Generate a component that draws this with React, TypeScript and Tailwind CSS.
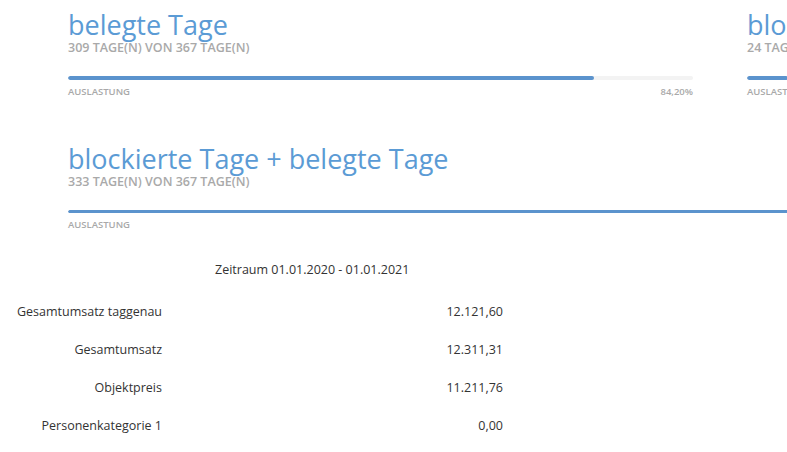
import React from "react";

function Card({
  title,
  sub,
  pct,
  label,
  width,
  bar,
}: {
  title: string;
  sub: string;
  pct: number;
  label: string;
  width: string;
  bar: string;
}) {
  return (
    <div className={`shrink-0 ${width}`}>
      <div className="text-[27px] leading-[30px] text-[#5b9bd5] whitespace-nowrap">{title}</div>
      <div className="text-[12.5px] leading-[16px] font-semibold text-[#a9a9a9] whitespace-nowrap">{sub}</div>
      <div className={`mt-[20px] ${bar} rounded-full bg-[#f3f3f3] overflow-hidden`}>
        <div className="h-full bg-[#5b93cd] rounded-full" style={{ width: `${pct}%` }} />
      </div>
      <div className="mt-[6px] flex justify-between text-[9.5px] leading-[12px] font-semibold text-[#a9a9a9]">
        <span>AUSLASTUNG</span>
        <span>{label}</span>
      </div>
    </div>
  );
}

const rows: [string, string][] = [
  ["Gesamtumsatz taggenau", "12.121,60"],
  ["Gesamtumsatz", "12.311,31"],
  ["Objektpreis", "11.211,76"],
  ["Personenkategorie 1", "0,00"],
];

export default function App() {
  return (
    <div
      className="w-[787px] h-[452px] overflow-hidden bg-white"
      style={{ fontFamily: '"Open Sans", sans-serif' }}
    >
      <div className="flex gap-[54px] pl-[68px] pt-[10px]">
        <Card
          title="belegte Tage"
          sub="309 TAGE(N) VON 367 TAGE(N)"
          pct={84.2}
          label="84,20%"
          width="w-[625px]"
          bar="h-[4px]"
        />
        <Card
          title="blockierte Tage"
          sub="24 TAGE(N) VON 367 TAGE(N)"
          pct={6.54}
          label="6,54%"
          width="w-[625px]"
          bar="h-[4px]"
        />
      </div>
      <div className="flex pl-[68px] pt-[46px]">
        <Card
          title="blockierte Tage + belegte Tage"
          sub="333 TAGE(N) VON 367 TAGE(N)"
          pct={100}
          label=""
          width="w-[900px]"
          bar="h-[3px]"
        />
      </div>
      <div className="text-[12.5px] text-[#333] pt-[30px]">
        <div className="pl-[215px] leading-[18px]">Zeitraum 01.01.2020 - 01.01.2021</div>
        <div className="mt-[24px] flex flex-col gap-[20px]">
          {rows.map(([l, v]) => (
            <div key={l} className="flex leading-[18px]">
              <div className="w-[162px] text-right">{l}</div>
              <div className="w-[341px] text-right">{v}</div>
            </div>
          ))}
        </div>
      </div>
    </div>
  );
}
